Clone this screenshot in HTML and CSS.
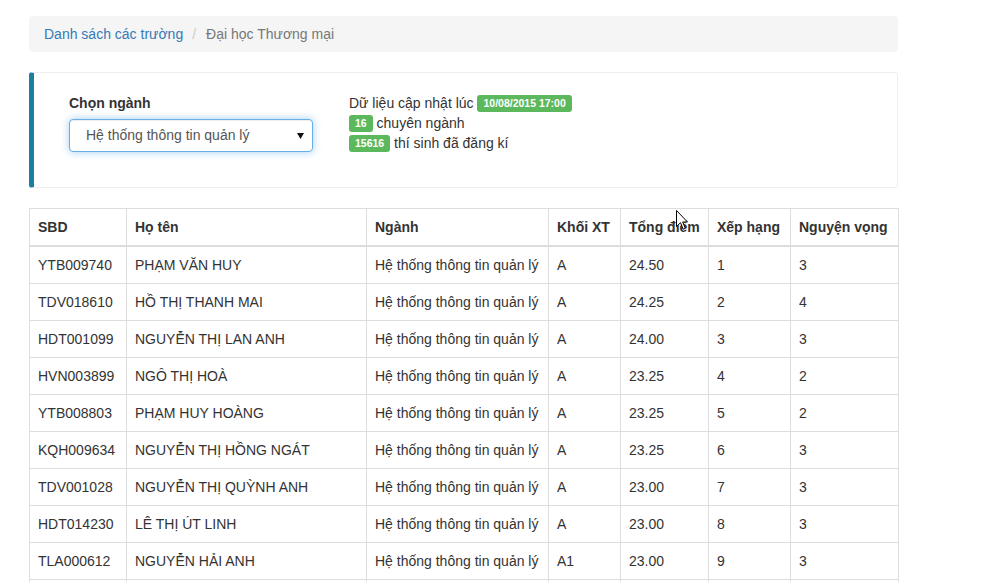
FILE: index.html
```html
<!DOCTYPE html>
<html lang="vi">
<head>
<meta charset="utf-8">
<title>Đại học Thương mại</title>
<link rel="stylesheet" href="styles.css">
</head>
<body>
<div class="container">
  <ol class="breadcrumb">
    <li><a href="#">Danh sách các trường</a></li>
    <li class="active">Đại học Thương mại</li>
  </ol>

  <div class="callout">
    <div class="form-col">
      <label class="form-label" for="nganh">Chọn ngành</label>
      <div class="select-wrap">
        <select id="nganh" class="form-control">
          <option>Hệ thống thông tin quản lý</option>
        </select>
        <svg class="select-arrow" width="7" height="6" viewBox="0 0 7 6"><path d="M0 0H7L3.5 6Z" fill="#111"/></svg>
      </div>
    </div>
    <div class="info-col">
      <div>Dữ liệu cập nhật lúc <span class="label">10/08/2015 17:00</span></div>
      <div><span class="label">16</span> chuyên ngành</div>
      <div><span class="label">15616</span> thí sinh đã đăng kí</div>
    </div>
  </div>

  <table class="table">
    <colgroup>
      <col class="c-sbd"><col class="c-name"><col class="c-nganh"><col class="c-khoi"><col class="c-diem"><col class="c-hang"><col class="c-nv">
    </colgroup>
    <thead>
      <tr><th>SBD</th><th>Họ tên</th><th>Ngành</th><th>Khối XT</th><th>Tổng điểm</th><th>Xếp hạng</th><th>Nguyện vọng</th></tr>
    </thead>
    <tbody>
      <tr><td>YTB009740</td><td>PHẠM VĂN HUY</td><td>Hệ thống thông tin quản lý</td><td>A</td><td>24.50</td><td>1</td><td>3</td></tr>
      <tr><td>TDV018610</td><td>HỒ THỊ THANH MAI</td><td>Hệ thống thông tin quản lý</td><td>A</td><td>24.25</td><td>2</td><td>4</td></tr>
      <tr><td>HDT001099</td><td>NGUYỄN THỊ LAN ANH</td><td>Hệ thống thông tin quản lý</td><td>A</td><td>24.00</td><td>3</td><td>3</td></tr>
      <tr><td>HVN003899</td><td>NGÔ THỊ HOÀ</td><td>Hệ thống thông tin quản lý</td><td>A</td><td>23.25</td><td>4</td><td>2</td></tr>
      <tr><td>YTB008803</td><td>PHẠM HUY HOÀNG</td><td>Hệ thống thông tin quản lý</td><td>A</td><td>23.25</td><td>5</td><td>2</td></tr>
      <tr><td>KQH009634</td><td>NGUYỄN THỊ HỒNG NGÁT</td><td>Hệ thống thông tin quản lý</td><td>A</td><td>23.25</td><td>6</td><td>3</td></tr>
      <tr><td>TDV001028</td><td>NGUYỄN THỊ QUỲNH ANH</td><td>Hệ thống thông tin quản lý</td><td>A</td><td>23.00</td><td>7</td><td>3</td></tr>
      <tr><td>HDT014230</td><td>LÊ THỊ ÚT LINH</td><td>Hệ thống thông tin quản lý</td><td>A</td><td>23.00</td><td>8</td><td>3</td></tr>
      <tr><td>TLA000612</td><td>NGUYỄN HẢI ANH</td><td>Hệ thống thông tin quản lý</td><td>A1</td><td>23.00</td><td>9</td><td>3</td></tr>
      <tr class="tail"><td></td><td></td><td></td><td></td><td></td><td></td><td></td></tr>
    </tbody>
  </table>
</div>

<svg class="cursor" width="13" height="21" viewBox="0 0 13 21"><path d="M0.5 0.5V16.5L4.5 12.7L7.2 19.2L9.3 18.3L6.7 12H11.5Z" fill="#fff" stroke="#000" stroke-width="1" stroke-linejoin="round"/></svg>
</body>
</html>
```

FILE: styles.css
```css
* { box-sizing: border-box; }

html, body {
  margin: 0;
  padding: 0;
  background: #fff;
}

body {
  font-family: "Liberation Sans", Arial, sans-serif;
  font-size: 14px;
  line-height: 20px;
  color: #333;
  position: relative;
  overflow: hidden;
  height: 582px;
}

.container {
  width: 869px;
  margin-left: 29px;
  padding-top: 16px;
}

.breadcrumb {
  list-style: none;
  margin: 0 0 20px;
  padding: 8px 15px;
  background: #f5f5f5;
  border-radius: 4px;
  display: flex;
}

.breadcrumb li + li::before {
  content: "/";
  color: #ccc;
  padding: 0 10px 0 9px;
}

.breadcrumb a {
  color: #337ab7;
  text-decoration: none;
}

.breadcrumb .active {
  color: #777;
}

.callout {
  display: flex;
  gap: 36px;
  padding: 20px 20px 20px 35px;
  border: 1px solid #eee;
  border-left: 5px solid #1b809e;
  border-radius: 3px;
  margin-bottom: 20px;
}

.form-col {
  width: 244px;
  padding-bottom: 15px;
}

.form-label {
  display: block;
  font-weight: bold;
  margin-bottom: 6px;
}

.select-wrap {
  position: relative;
}

.form-control {
  display: block;
  width: 244px;
  height: 33px;
  padding: 5px 12px 6px 16px;
  font-family: inherit;
  font-size: 14px;
  color: #555;
  background: #fff;
  border: 1px solid #66afe9;
  border-radius: 4px;
  box-shadow: inset 0 1px 1px rgba(0,0,0,.075), 0 0 8px rgba(102,175,233,.6);
  appearance: none;
  -webkit-appearance: none;
  outline: none;
}

.select-arrow {
  position: absolute;
  right: 9px;
  top: 14px;
}

.label {
  display: inline-block;
  background: #5cb85c;
  color: #fff;
  font-size: 10.5px;
  font-weight: bold;
  line-height: 1;
  padding: 3px 6px 3px;
  border-radius: 3px;
  vertical-align: 1px;
}

.table {
  width: 869px;
  table-layout: fixed;
  border-collapse: collapse;
  border: 1px solid #ddd;
}

.c-sbd { width: 97px; }
.c-name { width: 240px; }
.c-nganh { width: 182px; }
.c-khoi { width: 72px; }
.c-diem { width: 88px; }
.c-hang { width: 82px; }
.c-nv { width: 108px; }

.table th,
.table td {
  border: 1px solid #ddd;
  padding: 8px;
  line-height: 20px;
  text-align: left;
  white-space: nowrap;
  overflow: hidden;
}

.table th {
  font-weight: bold;
  border-bottom-width: 2px;
}

.table td {
  height: 37px;
}

.cursor {
  position: absolute;
  left: 676px;
  top: 210px;
}
```
